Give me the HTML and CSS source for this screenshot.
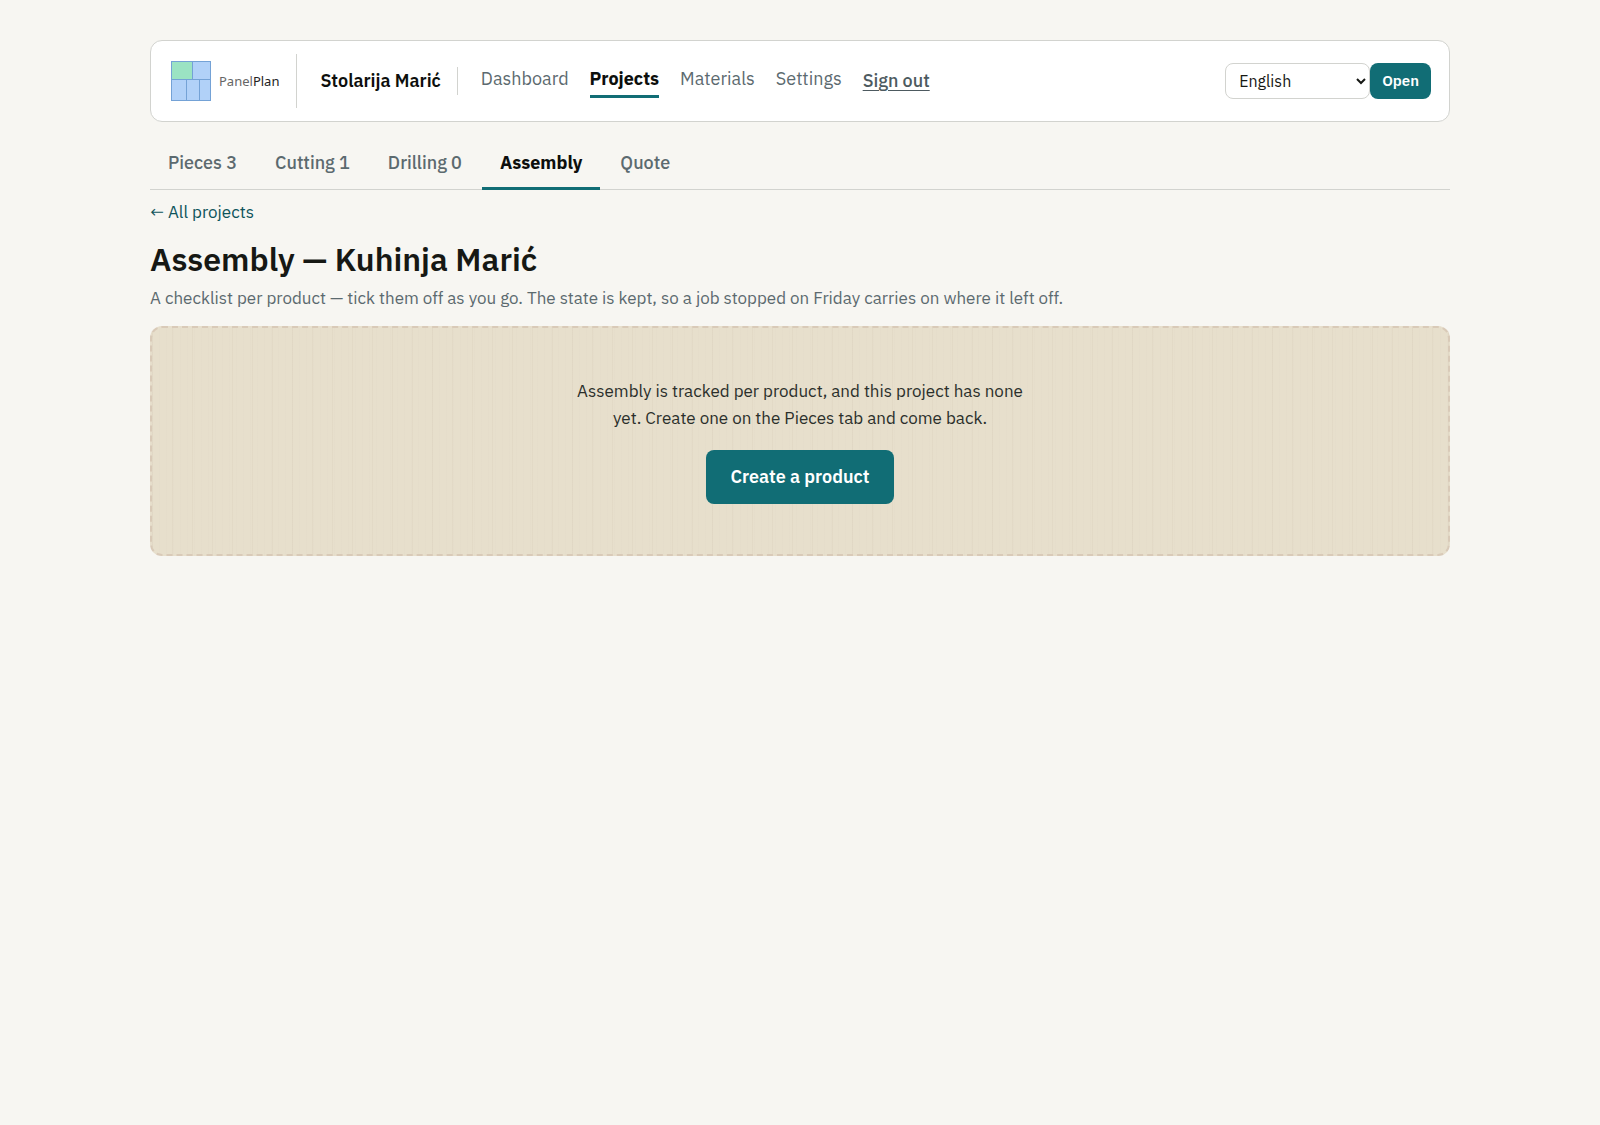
FILE: index.html
```html
<!DOCTYPE html>
<html lang="en">

<head>
  <meta charset="UTF-8">
  <meta name="viewport" content="width=device-width, initial-scale=1.0">
  <title>Assembly — Kuhinja Marić</title>
  <link rel="stylesheet" href="styles.css">
</head>

<body>
  <div class="page">

    <header class="topbar">
      <a class="brand" href="#">
        <svg class="brand-mark" viewBox="0 0 40 40" width="40" height="40" aria-hidden="true">
          <g stroke="#74a2d6" stroke-width="1">
            <rect x="0.5" y="0.5" width="21" height="18" fill="#9be3c3" />
            <rect x="21.5" y="0.5" width="18" height="18" fill="#b1d1f8" />
            <rect x="0.5" y="18.5" width="15" height="21" fill="#b1d1f8" />
            <rect x="15.5" y="18.5" width="13" height="21" fill="#b1d1f8" />
            <rect x="28.5" y="18.5" width="11" height="21" fill="#b1d1f8" />
          </g>
        </svg>
        <span class="brand-name">Panel<b>Plan</b></span>
      </a>

      <span class="workshop">Stolarija Marić</span>

      <nav class="nav">
        <a href="#">Dashboard</a>
        <a class="active" href="#">Projects</a>
        <a href="#">Materials</a>
        <a href="#">Settings</a>
        <button class="signout" type="button">Sign out</button>
      </nav>

      <form class="language">
        <select aria-label="Language">
          <option>English</option>
          <option>Srpski</option>
        </select>
        <button type="button">Open</button>
      </form>
    </header>

    <nav class="tabs">
      <a href="#">Pieces 3</a>
      <a href="#">Cutting 1</a>
      <a href="#">Drilling 0</a>
      <a class="active" href="#">Assembly</a>
      <a href="#">Quote</a>
    </nav>

    <main>
      <a class="back" href="#">← All projects</a>
      <h1>Assembly — Kuhinja Marić</h1>
      <p class="lead">A checklist per product — tick them off as you go. The state is kept, so a job stopped on Friday carries on where it left off.</p>

      <section class="empty">
        <p>Assembly is tracked per product, and this project has none yet. Create one on the Pieces tab and come back.</p>
        <a class="button" href="#">Create a product</a>
      </section>
    </main>

  </div>
</body>

</html>
```

FILE: styles.css
```css
* {
  box-sizing: border-box;
}

body {
  margin: 0;
  padding: 40px 24px;
  background: #f7f6f2;
  color: #161814;
  font-family: "IBM Plex Sans", Roboto, sans-serif;
  font-size: 18px;
  line-height: 28px;
}

a {
  color: inherit;
  text-decoration: none;
}

button,
select {
  font: inherit;
}

.page {
  max-width: 1300px;
  margin: 0 auto;
}

/* Top bar */
.topbar {
  display: flex;
  align-items: center;
  padding: 13px 18px;
  background: #fff;
  border: 1px solid #d2d3cf;
  border-radius: 12px;
}

.brand {
  display: flex;
  align-items: center;
  gap: 8px;
  height: 54px;
  padding: 0 17px 0 2px;
  border-right: 1px solid #d2d3cf;
}

.brand-name {
  color: #666;
  font-family: "Noto Sans", sans-serif;
  font-size: 13px;
}

.brand-name b {
  color: #222;
  font-weight: 400;
}

.workshop {
  margin-left: 23px;
  padding-right: 16px;
  border-right: 1px solid #d2d3cf;
  color: #0d0f0d;
  font-weight: 600;
}

.nav {
  display: flex;
  align-items: center;
  gap: 21px;
  margin-left: 23px;
  color: #5c6a6f;
}

.nav a {
  padding-top: 1px;
  padding-bottom: 2px;
  border-bottom: 3px solid transparent;
}

.nav .active {
  border-color: #116d75;
  color: #0d0f0d;
  font-weight: 700;
}

.signout {
  padding: 0;
  border: 0;
  background: none;
  color: #4d5a60;
  font-weight: 500;
  text-decoration: underline;
  text-underline-offset: 3px;
}

.language {
  display: flex;
  margin-left: auto;
}

.language select {
  width: 145px;
  height: 36px;
  padding: 0 0 0 9px;
  background: #fff;
  border: 1px solid #d2d3cf;
  border-radius: 8px;
  color: #161814;
  font-size: 16px;
}

.language button {
  height: 36px;
  padding: 0 12px;
  border: 0;
  border-radius: 8px;
  background: #116d75;
  color: #fff;
  font-size: 15px;
  font-weight: 600;
}

/* Project tabs */
.tabs {
  display: flex;
  gap: 2px;
  margin-top: 14px;
  border-bottom: 1px solid #d2d3cf;
  color: #5c6a6f;
  font-weight: 500;
}

.tabs a {
  margin-bottom: -1px;
  padding: 13px 18px 10px;
  border-bottom: 3px solid transparent;
}

.tabs .active {
  border-color: #116d75;
  color: #0d0f0d;
  font-weight: 700;
}

/* Heading */
.back {
  display: block;
  margin-top: 8px;
  color: #0d545b;
  font-size: 17px;
}

h1 {
  margin: 12px 0 6px;
  font-size: 32px;
  font-weight: 600;
  line-height: 42px;
}

.lead {
  margin: 0;
  color: #5c6a6f;
  font-size: 17px;
  line-height: 24px;
}

/* Empty state on a wood grain panel */
.empty {
  display: flex;
  flex-direction: column;
  align-items: center;
  gap: 18px;
  margin-top: 16px;
  padding: 50px 24px;
  background:
    repeating-linear-gradient(90deg, rgba(120, 95, 60, 0.04) 0 1px, transparent 1px 20px),
    repeating-linear-gradient(90deg, rgba(120, 95, 60, 0.01) 0 1px, transparent 1px 7px),
    #e7dfcc;
  border: 2px dashed #d9cab8;
  border-radius: 12px;
  color: #2b2f2b;
  text-align: center;
}

.empty p {
  max-width: 470px;
  margin: 0;
  font-size: 17px;
  line-height: 27px;
}

.button {
  padding: 13px 24px;
  border-radius: 8px;
  background: #116d75;
  color: #fff;
  font-weight: 600;
}
```
